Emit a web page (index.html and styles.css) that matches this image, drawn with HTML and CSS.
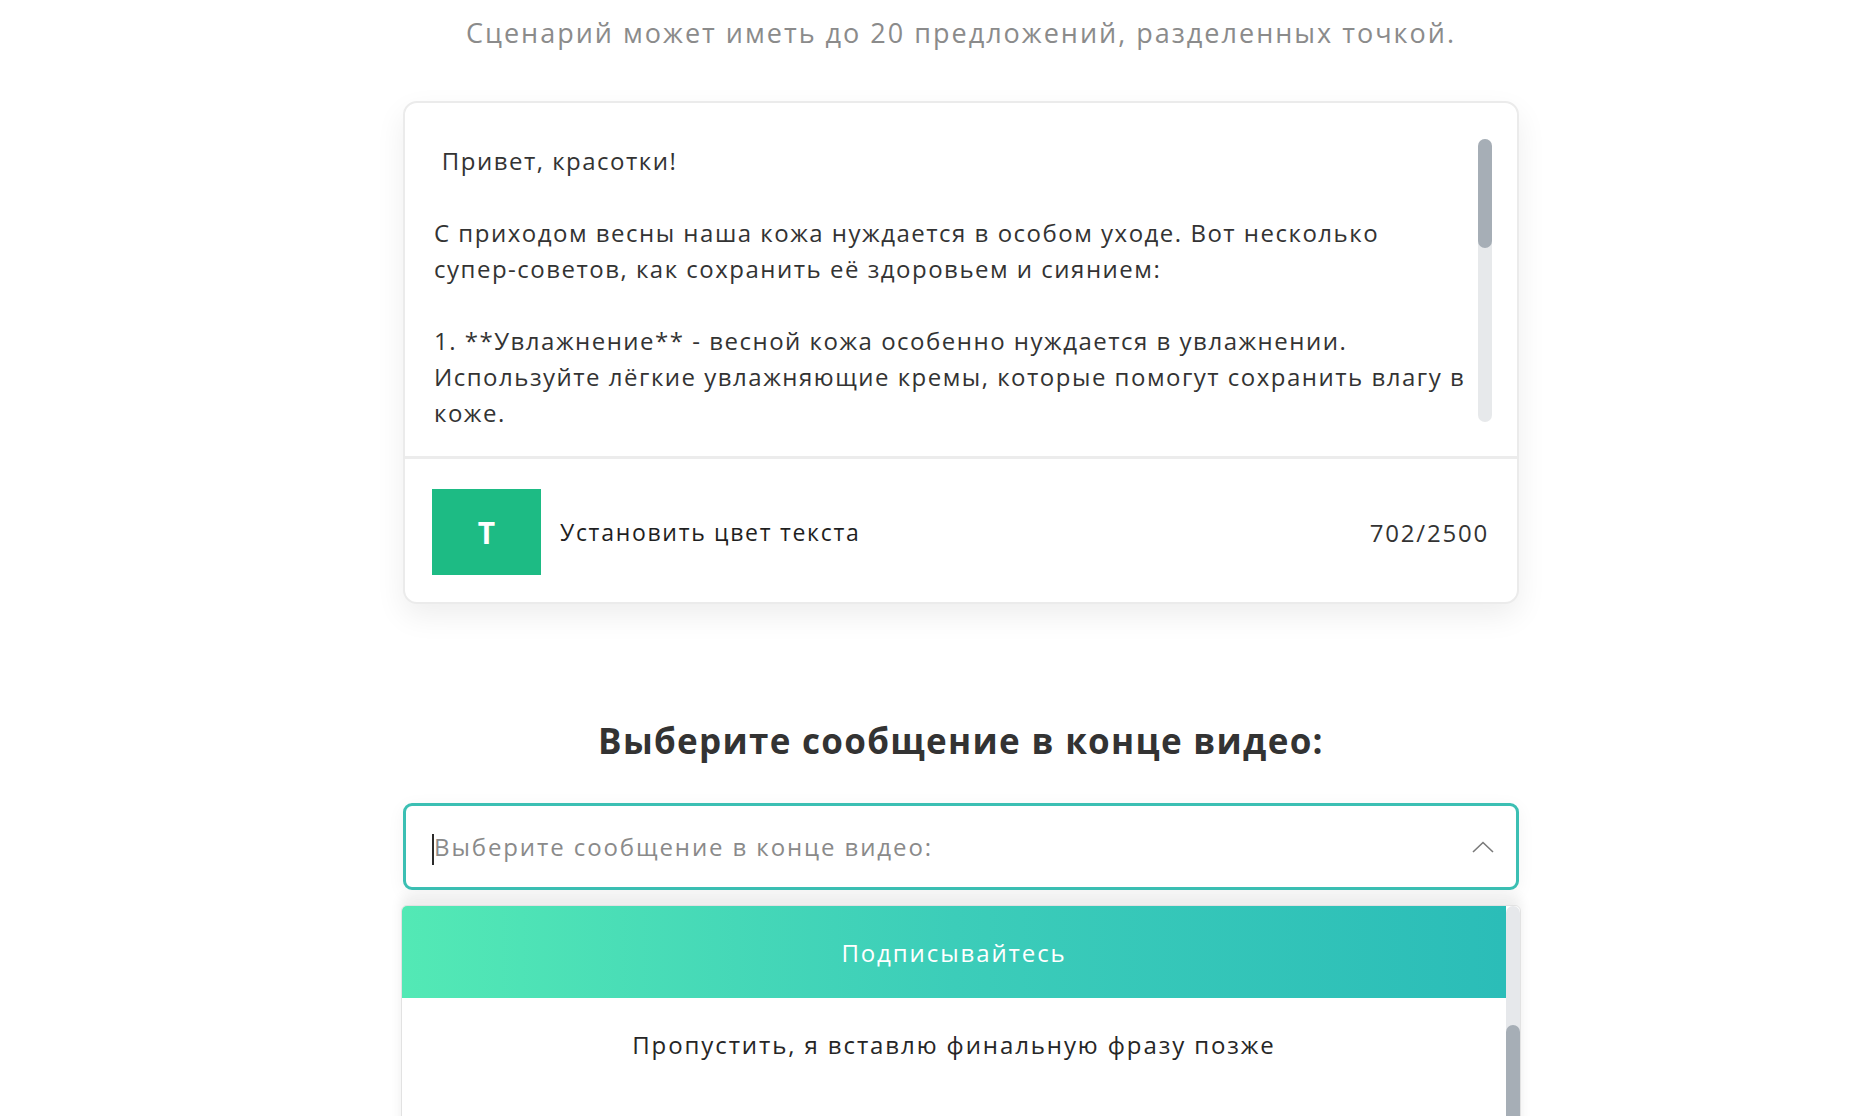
FILE: index.html
```html
<!DOCTYPE html>
<html lang="ru">
<head>
  <meta charset="UTF-8">
  <meta name="viewport" content="width=device-width, initial-scale=1.0">
  <title>Сценарий видео</title>
  <link rel="stylesheet" href="styles.css">
</head>
<body>
  <div class="page">
    <div class="content">
      <p class="hint">Сценарий может иметь до 20 предложений, разделенных точкой.</p>

      <div class="script-card">
        <div class="script-wrap">
          <div class="script-text"> Привет, красотки!

С приходом весны наша кожа нуждается в особом уходе. Вот несколько
супер-советов, как сохранить её здоровьем и сиянием:

1. **Увлажнение** - весной кожа особенно нуждается в увлажнении.
Используйте лёгкие увлажняющие кремы, которые помогут сохранить влагу в
коже.
</div>
          <div class="scrollbar">
            <div class="thumb"></div>
          </div>
        </div>
        <div class="script-footer">
          <button class="color-btn">T</button>
          <span class="color-label">Установить цвет текста</span>
          <span class="counter">702/2500</span>
        </div>
      </div>

      <h2 class="section-title">Выберите сообщение в конце видео:</h2>

      <div class="select-box">
        <span class="caret"></span>
        <span class="placeholder">Выберите сообщение в конце видео:</span>
        <svg class="chevron" width="22" height="12" viewBox="0 0 22 12">
          <polyline points="1,11 11,1.5 21,11" fill="none" stroke="#7a7a7a" stroke-width="1.6"/>
        </svg>
      </div>

      <div class="options">
        <div class="option-list">
          <div class="option active">Подписывайтесь</div>
          <div class="option">Пропустить, я вставлю финальную фразу позже</div>
        </div>
        <div class="scrollbar list-scrollbar">
          <div class="thumb"></div>
        </div>
      </div>
    </div>
  </div>
</body>
</html>
```

FILE: styles.css
```css
body {
  margin: 0;
  font-family: 'Open Sans', 'Noto Sans', sans-serif;
  background: #ffffff;
  color: #2b2b2b;
}

.page {
  padding-left: 58px;
}

.content {
  width: 1116px;
  margin: 0 auto;
}

.hint {
  margin: 0;
  padding-top: 13px;
  font-size: 27px;
  line-height: 40px;
  color: #8b8b8b;
  text-align: center;
  letter-spacing: 2px;
}

.script-card {
  box-sizing: border-box;
  margin-top: 48px;
  border: 2px solid #ebebeb;
  border-radius: 14px;
  background: #ffffff;
  box-shadow: 0 12px 30px rgba(0, 0, 0, 0.07);
}

.script-wrap {
  display: flex;
  padding: 15px 25px 13px 29px;
}

.script-text {
  flex: 1;
  box-sizing: border-box;
  height: 325px;
  padding-top: 25px;
  overflow: hidden;
  white-space: pre;
  font-size: 24px;
  line-height: 36px;
  color: #333333;
  letter-spacing: 1.5px;
}

/* drawn scrollbars */
.scrollbar {
  width: 14px;
  margin: 21px 0;
  background: #e7e9eb;
  border-radius: 7px;
}

.scrollbar .thumb {
  height: 109px;
  background: #a6aeb6;
  border-radius: 7px;
}

.script-footer {
  display: flex;
  align-items: center;
  border-top: 3px solid #ececec;
  padding: 30px 28px 27px 27px;
}

.color-btn {
  width: 109px;
  height: 86px;
  border: none;
  background: #1dbb84;
  color: #ffffff;
  font-family: 'Open Sans', sans-serif;
  font-size: 30px;
  font-weight: 700;
  cursor: pointer;
}

.color-label {
  margin-left: 19px;
  font-size: 23px;
  color: #1f1f1f;
  letter-spacing: 1.7px;
}

.counter {
  margin-left: auto;
  font-size: 24px;
  color: #333333;
  letter-spacing: 1.8px;
}

.section-title {
  margin: 115px 0 0;
  font-size: 35px;
  line-height: 44px;
  font-weight: 700;
  text-align: center;
  color: #333333;
  letter-spacing: 1.3px;
}

.select-box {
  box-sizing: border-box;
  display: flex;
  align-items: center;
  height: 87px;
  margin-top: 40px;
  padding: 0 22px 0 26px;
  border: 3px solid #3bbfb3;
  border-radius: 9px;
  box-shadow: 0 4px 18px rgba(0, 0, 0, 0.05);
}

.caret {
  width: 2px;
  height: 31px;
  margin-top: 6px;
  background: #2b2b2b;
}

.placeholder {
  font-size: 24px;
  color: #8a8a8a;
  letter-spacing: 1.9px;
}

.chevron {
  margin-left: auto;
}

.options {
  box-sizing: border-box;
  display: flex;
  height: 400px;
  margin: 15px -2px 0;
  border: 1px solid #e2e2e2;
  border-radius: 6px 6px 0 0;
  background: #ffffff;
  box-shadow: 0 -8px 12px rgba(0, 0, 0, 0.07);
  overflow: hidden;
}

.option-list {
  flex: 1;
}

.option {
  height: 92px;
  display: flex;
  align-items: center;
  justify-content: center;
  font-size: 24px;
  font-weight: 500;
  color: #262626;
  letter-spacing: 1.9px;
}

.option.active {
  background: linear-gradient(to right, #53e9b5, #3ccdb9 50%, #2bbdb8);
  color: #ffffff;
}

.list-scrollbar {
  margin: 0;
  background: #e6e8eb;
  border-radius: 7px 7px 0 0;
}

.list-scrollbar .thumb {
  margin-top: 119px;
  height: 240px;
}
```
